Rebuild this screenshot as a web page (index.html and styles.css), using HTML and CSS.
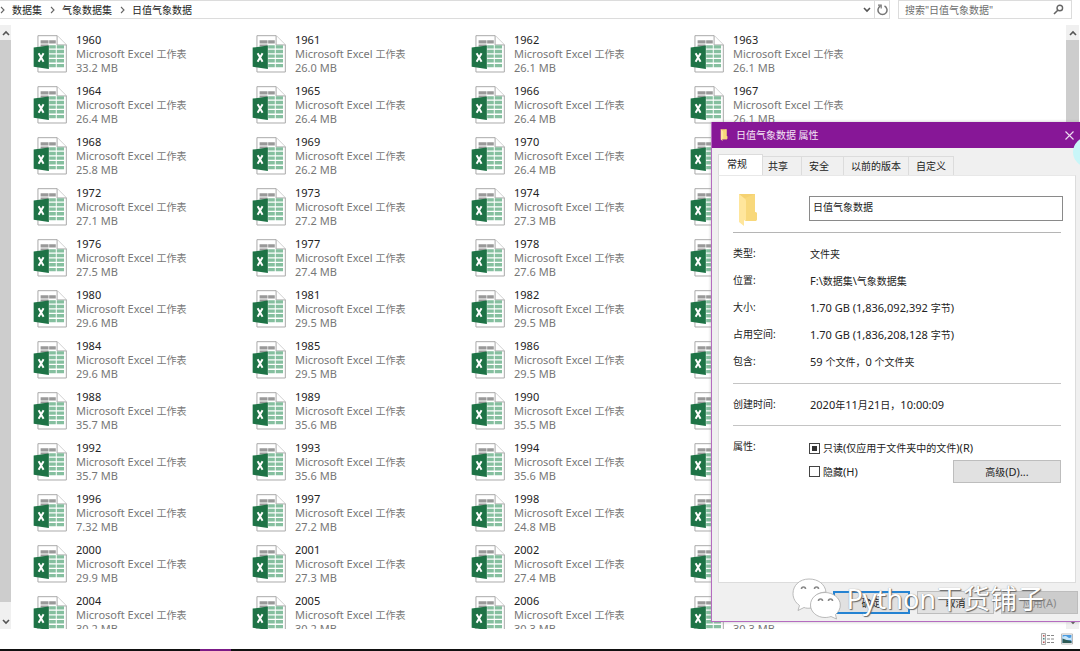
FILE: index.html
```
<!DOCTYPE html>
<html lang="zh-CN">
<head>
<meta charset="utf-8">
<title>日值气象数据</title>
<link rel="stylesheet" href="styles.css">
</head>
<body>
<svg class="defs" aria-hidden="true">
  <symbol id="excel" viewBox="99 106 103 115">
    <path d="M114 108H172L200 136V218H114Z" fill="#fff" stroke="#a9a9a9" stroke-width="3"/>
    <path d="M172 108V136H200" fill="#fff" stroke="#a9a9a9" stroke-width="3"/>
    <path d="M122 122h24v10h-24zM148 122h20v10h-20zM122 135h24v6h-24z" fill="#999"/>
    <path d="M148 137h20v10h-20zM171 137h22v10h-22zM148 151h20v10h-20zM171 151h22v10h-22zM148 165h20v10h-20zM171 165h22v10h-22zM148 179h20v10h-20zM171 179h22v10h-22zM148 194h20v10h-20zM171 194h22v10h-22z" fill="#85bf9f"/>
    <path d="M101 144L147 138V209L101 202Z" fill="#1e7346"/>
    <path d="M116 161L131 187M131 161L116 187" stroke="#fff" stroke-width="6" fill="none"/>
  </symbol>
  <symbol id="up" viewBox="0 0 8 6"><path d="M1 5L4 2L7 5" fill="none" stroke="currentColor" stroke-width="1.6"/></symbol>
  <symbol id="down" viewBox="0 0 8 6"><path d="M1 1L4 4L7 1" fill="none" stroke="currentColor" stroke-width="1.6"/></symbol>
  <symbol id="next" viewBox="0 0 5 8"><path d="M1 1L4 4L1 7" fill="none" stroke="#666" stroke-width="1.1"/></symbol>
  <symbol id="folder" viewBox="0 0 20 33">
    <path d="M1 1H17V19L19 20V26L18 28H7Z" fill="#f5d272"/>
    <path d="M7 5L17 1V19L19 20V26L18 28H7Z" fill="#f8d87b"/>
    <path d="M1 1L6 5Q8 6 8 8V28L6 27V33L1 29Z" fill="#ffe69c"/>
  </symbol>
</svg>

<header class="topbar">
  <nav class="address">
    <svg class="chev"><use href="#next"/></svg><a href="#">数据集</a>
    <svg class="chev"><use href="#next"/></svg><a href="#">气象数据集</a>
    <svg class="chev"><use href="#next"/></svg><a href="#">日值气象数据</a>
    <svg class="arrow drop"><use href="#down"/></svg>
    <button class="refresh" aria-label="刷新"><svg width="11" height="12" viewBox="0 0 11 12"><path d="M3.5 2A4.5 4.5 0 1 0 7.5 2" fill="none" stroke="#777" stroke-width="1.5"/><path d="M1 1.2H4.2V4.5" fill="none" stroke="#777" stroke-width="1.2"/></svg></button>
  </nav>
  <label class="search"><input type="search" aria-label="搜索" placeholder='搜索"日值气象数据"'><svg width="11" height="11" viewBox="0 0 11 11"><circle cx="6.8" cy="4" r="2.8" fill="none" stroke="#666" stroke-width="1.4"/><path d="M4.8 6.2L1 10" stroke="#666" stroke-width="1.6"/></svg></label>
</header>

<main class="main">
  <div class="scroll left"><button aria-label="向上"><svg class="arrow"><use href="#up"/></svg></button><div class="thumb"></div><button class="end" aria-label="向下"><svg class="arrow"><use href="#down"/></svg></button></div>
  <ul class="files">
    <li><svg><use href="#excel"/></svg><div><b>1960</b><p>Microsoft Excel <i>工作表</i></p><p>33.2 MB</p></div></li>
    <li><svg><use href="#excel"/></svg><div><b>1961</b><p>Microsoft Excel <i>工作表</i></p><p>26.0 MB</p></div></li>
    <li><svg><use href="#excel"/></svg><div><b>1962</b><p>Microsoft Excel <i>工作表</i></p><p>26.1 MB</p></div></li>
    <li><svg><use href="#excel"/></svg><div><b>1963</b><p>Microsoft Excel <i>工作表</i></p><p>26.1 MB</p></div></li>
    <li><svg><use href="#excel"/></svg><div><b>1964</b><p>Microsoft Excel <i>工作表</i></p><p>26.4 MB</p></div></li>
    <li><svg><use href="#excel"/></svg><div><b>1965</b><p>Microsoft Excel <i>工作表</i></p><p>26.4 MB</p></div></li>
    <li><svg><use href="#excel"/></svg><div><b>1966</b><p>Microsoft Excel <i>工作表</i></p><p>26.4 MB</p></div></li>
    <li><svg><use href="#excel"/></svg><div><b>1967</b><p>Microsoft Excel <i>工作表</i></p><p>26.1 MB</p></div></li>
    <li><svg><use href="#excel"/></svg><div><b>1968</b><p>Microsoft Excel <i>工作表</i></p><p>25.8 MB</p></div></li>
    <li><svg><use href="#excel"/></svg><div><b>1969</b><p>Microsoft Excel <i>工作表</i></p><p>26.2 MB</p></div></li>
    <li><svg><use href="#excel"/></svg><div><b>1970</b><p>Microsoft Excel <i>工作表</i></p><p>26.4 MB</p></div></li>
    <li><svg><use href="#excel"/></svg></li>
    <li><svg><use href="#excel"/></svg><div><b>1972</b><p>Microsoft Excel <i>工作表</i></p><p>27.1 MB</p></div></li>
    <li><svg><use href="#excel"/></svg><div><b>1973</b><p>Microsoft Excel <i>工作表</i></p><p>27.2 MB</p></div></li>
    <li><svg><use href="#excel"/></svg><div><b>1974</b><p>Microsoft Excel <i>工作表</i></p><p>27.3 MB</p></div></li>
    <li><svg><use href="#excel"/></svg></li>
    <li><svg><use href="#excel"/></svg><div><b>1976</b><p>Microsoft Excel <i>工作表</i></p><p>27.5 MB</p></div></li>
    <li><svg><use href="#excel"/></svg><div><b>1977</b><p>Microsoft Excel <i>工作表</i></p><p>27.4 MB</p></div></li>
    <li><svg><use href="#excel"/></svg><div><b>1978</b><p>Microsoft Excel <i>工作表</i></p><p>27.6 MB</p></div></li>
    <li><svg><use href="#excel"/></svg></li>
    <li><svg><use href="#excel"/></svg><div><b>1980</b><p>Microsoft Excel <i>工作表</i></p><p>29.6 MB</p></div></li>
    <li><svg><use href="#excel"/></svg><div><b>1981</b><p>Microsoft Excel <i>工作表</i></p><p>29.5 MB</p></div></li>
    <li><svg><use href="#excel"/></svg><div><b>1982</b><p>Microsoft Excel <i>工作表</i></p><p>29.5 MB</p></div></li>
    <li><svg><use href="#excel"/></svg></li>
    <li><svg><use href="#excel"/></svg><div><b>1984</b><p>Microsoft Excel <i>工作表</i></p><p>29.6 MB</p></div></li>
    <li><svg><use href="#excel"/></svg><div><b>1985</b><p>Microsoft Excel <i>工作表</i></p><p>29.5 MB</p></div></li>
    <li><svg><use href="#excel"/></svg><div><b>1986</b><p>Microsoft Excel <i>工作表</i></p><p>29.5 MB</p></div></li>
    <li><svg><use href="#excel"/></svg></li>
    <li><svg><use href="#excel"/></svg><div><b>1988</b><p>Microsoft Excel <i>工作表</i></p><p>35.7 MB</p></div></li>
    <li><svg><use href="#excel"/></svg><div><b>1989</b><p>Microsoft Excel <i>工作表</i></p><p>35.6 MB</p></div></li>
    <li><svg><use href="#excel"/></svg><div><b>1990</b><p>Microsoft Excel <i>工作表</i></p><p>35.5 MB</p></div></li>
    <li><svg><use href="#excel"/></svg></li>
    <li><svg><use href="#excel"/></svg><div><b>1992</b><p>Microsoft Excel <i>工作表</i></p><p>35.7 MB</p></div></li>
    <li><svg><use href="#excel"/></svg><div><b>1993</b><p>Microsoft Excel <i>工作表</i></p><p>35.6 MB</p></div></li>
    <li><svg><use href="#excel"/></svg><div><b>1994</b><p>Microsoft Excel <i>工作表</i></p><p>35.6 MB</p></div></li>
    <li><svg><use href="#excel"/></svg></li>
    <li><svg><use href="#excel"/></svg><div><b>1996</b><p>Microsoft Excel <i>工作表</i></p><p>7.32 MB</p></div></li>
    <li><svg><use href="#excel"/></svg><div><b>1997</b><p>Microsoft Excel <i>工作表</i></p><p>27.2 MB</p></div></li>
    <li><svg><use href="#excel"/></svg><div><b>1998</b><p>Microsoft Excel <i>工作表</i></p><p>24.8 MB</p></div></li>
    <li><svg><use href="#excel"/></svg></li>
    <li><svg><use href="#excel"/></svg><div><b>2000</b><p>Microsoft Excel <i>工作表</i></p><p>29.9 MB</p></div></li>
    <li><svg><use href="#excel"/></svg><div><b>2001</b><p>Microsoft Excel <i>工作表</i></p><p>27.3 MB</p></div></li>
    <li><svg><use href="#excel"/></svg><div><b>2002</b><p>Microsoft Excel <i>工作表</i></p><p>27.4 MB</p></div></li>
    <li><svg><use href="#excel"/></svg></li>
    <li><svg><use href="#excel"/></svg><div><b>2004</b><p>Microsoft Excel <i>工作表</i></p><p>30.2 MB</p></div></li>
    <li><svg><use href="#excel"/></svg><div><b>2005</b><p>Microsoft Excel <i>工作表</i></p><p>30.2 MB</p></div></li>
    <li><svg><use href="#excel"/></svg><div><b>2006</b><p>Microsoft Excel <i>工作表</i></p><p>30.3 MB</p></div></li>
    <li><svg><use href="#excel"/></svg><div><b>2007</b><p>Microsoft Excel <i>工作表</i></p><p>30.3 MB</p></div></li>
  </ul>
  <div class="scroll right"><button aria-label="向上"><svg class="arrow"><use href="#up"/></svg></button><div class="thumb"></div><button class="end" aria-label="向下"><svg class="arrow"><use href="#down"/></svg></button></div>
</main>

<footer class="status">
  <svg width="14" height="12" viewBox="0 0 14 12"><path d="M.5 .5h4v11h-4z" fill="#f4f4f4" stroke="#aaa"/><path d="M2 2h1.5v1.5H2zM2 8.500h1.500v1.500H2z" fill="#b55"/><path d="M2 5h1.500v1.500H2z" fill="#488"/><path d="M6 2.500h3M10 2.500h3M6 6h3M10 6h3M6 9.500h3M10 9.500h3" stroke="#888"/></svg>
  <svg width="12" height="12" viewBox="0 0 12 12"><path d="M.5 1h11v10H.5z" fill="#fff" stroke="#bbb"/><path d="M1.500 2h9v8h-9z" fill="#4a9be0"/><path d="M1.500 4q3-2 5 0t4 0v3h-9z" fill="#c7e6fa"/><path d="M1.500 5.500l4 1.500 5 1v2h-9z" fill="#2e5b55"/></svg>
</footer>
<div class="taskbar"><div class="running"></div></div>

<section class="dialog" role="dialog" aria-label="日值气象数据 属性">
  <div class="title"><svg class="mini"><use href="#folder"/></svg><h1>日值气象数据 属性</h1><button aria-label="关闭"><svg width="9" height="9" viewBox="0 0 9 9"><path d="M.5 .5L8.500 8.500M8.500 .5L.5 8.500" stroke="#eddcf0" stroke-width="1.100"/></svg></button></div>
  <div class="tabs" role="tablist">
    <button class="tab active" role="tab">常规</button><button class="tab share" role="tab">共享</button><button class="tab safety" role="tab">安全</button><button class="tab" role="tab">以前的版本</button><button class="tab" role="tab">自定义</button>
  </div>
  <div class="panel">
    <div class="head"><svg class="big"><use href="#folder"/></svg><input type="text" aria-label="名称" value="日值气象数据"></div>
    <dl class="group">
      <dt>类型:</dt><dd><i>文件夹</i></dd>
      <dt>位置:</dt><dd>F:\<i>数据集</i>\<i>气象数据集</i></dd>
      <dt>大小:</dt><dd>1.70 GB (1,836,092,392 <i>字节</i>)</dd>
      <dt>占用空间:</dt><dd>1.70 GB (1,836,208,128 <i>字节</i>)</dd>
      <dt>包含:</dt><dd>59 <i>个文件，</i>0 <i>个文件夹</i></dd>
    </dl>
    <dl class="group created"><dt>创建时间:</dt><dd>2020<i>年</i>11<i>月</i>21<i>日，</i>10:00:09</dd></dl>
    <div class="attrs">
      <span>属性:</span>
      <div class="opts">
        <label><input type="checkbox" class="mixed"><span><i>只读</i>(<i>仅应用于文件夹中的文件</i>)(R)</span></label>
        <div class="line"><label><input type="checkbox"><span><i>隐藏</i>(H)</span></label><button class="btn adv"><i>高级</i>(D)...</button></div>
      </div>
    </div>
  </div>
  <div class="actions"><button class="btn ok"><i>确定</i></button><button class="btn"><i>取消</i></button><button class="btn off" disabled><i>应用</i>(A)</button></div>
  <div class="watermark">
    <svg width="49" height="42" viewBox="0 0 49 42"><g stroke="#aaa" stroke-width=".8" fill="#fff"><path d="M17 1C7.500 1 1 7.500 1 15.500C1 20.500 3.500 24.500 7.500 27.500L6 32.500L12 29.500C14 30.200 16 30.500 19 30C19 19 25 14.500 34 14C33 6 26 1 17 1Z"/><path d="M33 14.500C24.500 14.500 18.500 20 18.500 27C18.500 34 25 39.500 33 39.500C35.500 39.500 37.500 39 39 38.500L44.500 41L43.500 36.500C46.500 34 48.300 31 48.300 27C48.300 20 41 14.500 33 14.500Z"/></g><g fill="none" stroke="#888" stroke-width="1.600"><path d="M9.500 11a2 2 0 0 1 4 0M22.500 11a2 2 0 0 1 4 0M26.500 23a2 2 0 0 1 4 0M36.500 23a2 2 0 0 1 4 0"/></g></svg>
    <span>Python干货铺子</span>
  </div>
</section>
<div class="bubble"></div>
</body>
</html>
```
FILE: styles.css
```
* { box-sizing: border-box; }
body {
  position: relative;
  display: flex;
  flex-direction: column;
  height: 100vh;
  margin: 0;
  overflow: hidden;
  background: #fff;
  color: #222;
  font: 11px/14px "Noto Sans", "Noto Sans CJK SC", sans-serif;
}
button, input { margin: 0; padding: 0; border: 0; background: none; color: inherit; font: inherit; }
svg { display: block; flex: none; }
i { font-size: 10px; font-style: normal; line-height: 1; }
p, ul, dl, dd, h1 { margin: 0; padding: 0; font-size: 11px; font-weight: 400; }
.defs { position: absolute; width: 0; height: 0; }
.arrow { width: 8px; height: 6px; color: #555; }

.topbar { display: flex; gap: 8px; height: 19px; margin-bottom: 6px; padding-right: 8px; font-size: 10px; }
.address { display: flex; flex: 1; align-items: center; border: 1px solid #dcdcdc; border-left: 0; }
.address a { margin: 0 8px 0 7px; color: #222; text-decoration: none; }
.chev { width: 5px; height: 8px; }
.drop { margin: 0 3px 0 auto; }
.refresh { display: grid; place-items: center; align-self: stretch; width: 15px; border-left: 1px solid #dcdcdc; }
.search { display: flex; align-items: center; width: 174px; padding: 0 7px 0 6px; border: 1px solid #dcdcdc; }
.search input { flex: 1; min-width: 0; outline: 0; }
.search input::placeholder { color: #6d6d6d; }

.main { display: flex; flex: 1; min-height: 0; }
.scroll { display: flex; flex: none; flex-direction: column; width: 12px; background: #f0f0f0; }
.scroll button { display: grid; flex: none; place-items: center; height: 15px; }
.thumb { flex: 1; margin-bottom: 12px; background: #cdcdcd; }
.left { width: 11px; margin-right: 1px; }
.right { width: 13px; margin-right: 1px; }
.files {
  display: grid;
  flex: 1;
  grid-template-columns: repeat(4, 219px);
  grid-auto-rows: 51px;
  min-width: 0;
  padding: 7px 0 0 21px;
  overflow: hidden;
  list-style: none;
}
.files li { display: flex; gap: 9px; }
.files svg { width: 34px; height: 38px; margin-top: 3px; }
.files b { display: block; font-weight: 400; line-height: 15px; }
.files p { color: #777; white-space: nowrap; }

.status { display: flex; flex: none; align-items: center; justify-content: flex-end; gap: 6px; height: 20px; padding-right: 7px; }
.taskbar { flex: none; height: 2px; padding-left: 200px; background: #111; }
.running { width: 31px; height: 2px; background: #7b1b87; }

.dialog {
  position: absolute;
  top: 122px;
  right: 0;
  left: 711px;
  border: solid #b56cc0;
  border-width: 0 0 1px 1px;
  background: #f0f0f0;
  box-shadow: 0 0 3px #9999;
}
.title { display: flex; align-items: center; height: 26px; padding: 0 6px 0 7px; background: #871797; color: #f3e6f5; }
.title h1 { flex: 1; margin-left: 7px; font-size: 10px; }
.mini { width: 10px; height: 12px; }
.tabs { display: flex; align-items: flex-end; height: 27px; padding: 7px 0 0 6px; font-size: 10px; }
.tab { height: 19px; padding: 0 7px; border: 1px solid #dcdcdc; border-width: 1px 1px 0 0; }
.tab.share { padding: 0 13px 0 5px; }
.tab.safety { padding-right: 14px; }
.tab.active { height: 21px; padding: 0 15px 2px 8px; border-left-width: 1px; background: #fff; }
.panel { min-height: 408px; margin: 0 4px 0 6px; padding: 20px 14px; border: 1px solid #dcdcdc; border-top-color: #e8e8e8; background: #fff; font-size: 11px; }
.head { display: flex; align-items: flex-start; height: 37px; border-bottom: 1px solid #b5b5b5; }
.big { width: 20px; height: 33px; margin: -3px 51px 0 5px; }
.head input { flex: 1; height: 25px; margin-right: -2px; padding: 0 3px 5px; border: 1px solid #8a8a8a; background: #fff; font-size: 10px; }
.group { display: grid; grid-template-columns: 77px 1fr; grid-auto-rows: 27px; padding: 7px 0 8px; border-bottom: 1px solid #c4c4c4; line-height: 27px; }
.group dt { font-size: 10px; }
.group dd { white-space: nowrap; }
.group.created { padding: 7px 0; }
.attrs { display: grid; grid-template-columns: 76px 1fr; padding-top: 13px; font-size: 10px; }
.opts { padding-top: 2px; font-size: 11px; }
.opts label { display: flex; gap: 3px; align-items: center; white-space: nowrap; }
.opts input { display: grid; place-items: center; width: 11px; height: 11px; border: 1px solid #444; background: #fff; appearance: none; }
.mixed::before { width: 5px; height: 5px; background: #333; content: ""; }
.line { display: flex; justify-content: space-between; align-items: center; padding-top: 5px; }
.btn { width: 77px; height: 23px; border: 1px solid #bdbdbd; background: #e1e1e1; }
.btn.adv { width: 108px; }
.actions { display: flex; justify-content: flex-end; gap: 7px; padding: 8px 2px 7px 0; }
.btn.ok { border: 2px solid #2583d2; }
.btn.off { background: #ccc; color: #888; }
.watermark {
  position: absolute;
  right: 36px;
  bottom: 1px;
  display: flex;
  gap: 5px;
  align-items: center;
  color: #fff;
  font-size: 27px;
  line-height: 36px;
  text-shadow: 1px 1px 1px #666, 0 0 1px #888;
  white-space: nowrap;
  pointer-events: none;
}
.bubble { position: absolute; top: 137px; right: -23px; width: 30px; height: 30px; border-radius: 50%; background: #c8f6f8; }
```
